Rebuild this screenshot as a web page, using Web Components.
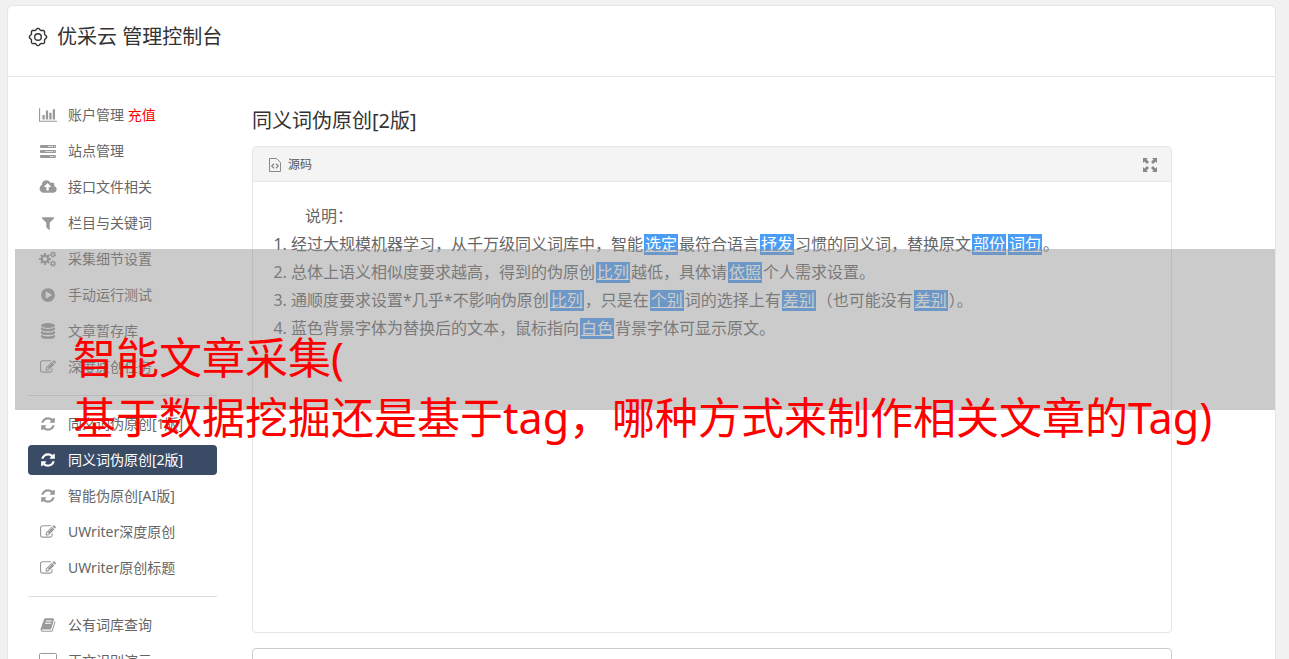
<!DOCTYPE html>
<html lang="zh-CN">
<head>
<meta charset="utf-8">
<meta name="viewport" content="width=device-width, initial-scale=1">
<title>优采云 管理控制台</title>
<style>
  body { margin: 0; background: #f1f1f1; color: #666; font: 14px/20px "Noto Sans", "Noto Sans CJK SC", sans-serif; }
</style>
</head>
<body>
<console-page></console-page>
<script>
// Outline of a gear: flat teeth around a circle, with a round hole.
function gear(cx, cy, outer, inner, hole, teeth, turn = 0) {
  const pts = [];
  const step = Math.PI * 2 / teeth;
  for (let i = 0; i < teeth; i++) {
    const a = i * step + turn;
    for (const [k, r] of [[-0.32, inner], [-0.2, outer], [0.2, outer], [0.32, inner]]) {
      pts.push((cx + Math.cos(a + k * step) * r).toFixed(2) + ' ' + (cy + Math.sin(a + k * step) * r).toFixed(2));
    }
  }
  return `M${pts.join('L')}ZM${cx - hole} ${cy}a${hole} ${hole} 0 1 0 ${hole * 2} 0a${hole} ${hole} 0 1 0 ${-hole * 2} 0z`;
}

const ICONS = {
  chart: [2048, 1792, '<path d="M640 896v512h-256v-512h256zm384-512v1024h-256v-1024h256zm1024 1152v128h-2048v-1536h128v1408h1920zm-640-896v768h-256v-768h256zm384-384v1152h-256v-1152h256z"/>'],
  server: [16, 16, '<g fill="none" stroke="currentColor"><path fill="currentColor" fill-opacity=".35" d="M.5 2.5h15v2H.5zM.5 7.5h15v2H.5zM.5 12.5h15v2H.5z"/></g><path d="M1 3h7v1H1zM1 8h4v1H1zM1 13h9v1H1zM13 3h1v1h-1zM13 8h1v1h-1zM13 13h1v1h-1z"/>'],
  upload: [2048, 1792, '<path d="M1344 864q0-14-9-23l-352-352q-9-9-23-9t-23 9l-351 351q-10 12-10 24 0 14 9 23t23 9h224v352q0 13 9.500 22.500t22.500 9.500h192q13 0 22.500-9.500t9.500-22.500v-352h224q13 0 22.500-9.500t9.500-22.500zm640 288q0 159-112.500 271.500t-271.500 112.500h-1088q-185 0-316.500-131.500t-131.500-316.500q0-130 70-240t188-165q-2-30-2-43 0-212 150-362t362-150q156 0 285.500 87t188.500 231q71-62 166-62 106 0 181 75t75 181q0 76-41 138 130 31 213.500 135.500t83.500 238.500z"/>'],
  filter: [1792, 1792, '<path d="M1595 295q17 41-14 70l-493 493v742q0 42-39 59-13 5-25 5-27 0-45-19l-256-256q-19-19-19-45v-486l-493-493q-31-29-14-70 17-39 59-39h1280q42 0 59 39z"/>'],
  cogs: [18, 16, `<path fill-rule="evenodd" d="${gear(6, 8, 6, 4.4, 2.1, 8)}${gear(14, 3.6, 3.2, 2.3, 1.1, 7, .3)}${gear(14, 12.6, 3.2, 2.3, 1.1, 7, .1)}"/>`],
  play: [1792, 1792, '<path d="M896 128q209 0 385.500 103t279.500 279.500 103 385.500-103 385.500-279.500 279.500-385.500 103-385.500-103-279.500-279.500-103-385.500 103-385.500 279.500-279.500 385.500-103zm384 823q32-18 32-55t-32-55l-544-320q-31-19-64-1-32 19-32 56v640q0 37 32 56 16 8 32 8 17 0 32-9z"/>'],
  database: [16, 16, '<ellipse cx="8" cy="2.500" rx="7" ry="2.500"/><path d="M1 4.300q2.500 1.700 7 1.700t7-1.700v1.700q0 2.300-7 2.300t-7-2.300zM1 8q2.500 1.700 7 1.700t7-1.700v1.700q0 2.300-7 2.300t-7-2.300zM1 11.700q2.500 1.700 7 1.700t7-1.700v1.700q0 2.500-7 2.500t-7-2.500z"/>'],
  edit: [1792, 1792, '<path d="M888 1184l116-116-152-152-116 116v56h96v96h56zm440-720q-16-16-33 1l-350 350q-17 17-1 33t33-1l350-350q17-17 1-33zm80 594v190q0 119-84.500 203.500t-203.500 84.500h-832q-119 0-203.500-84.500t-84.500-203.500v-832q0-119 84.500-203.500t203.500-84.500h832q63 0 117 25 15 7 18 23 3 17-9 29l-49 49q-14 14-32 8-23-6-45-6h-832q-66 0-113 47t-47 113v832q0 66 47 113t113 47h832q66 0 113-47t47-113v-126q0-13 9-22l64-64q15-15 35-7t20 29zm-96-738l288 288-672 672h-288v-288zm444 132l-92 92-288-288 92-92q28-28 68-28t68 28l152 152q28 28 28 68t-28 68z"/>'],
  refresh: [1792, 1792, '<path d="M1639 1056q0 5-1 7-64 268-268 434.500t-478 166.500q-146 0-282.500-55t-243.500-157l-129 129q-19 19-45 19t-45-19-19-45v-448q0-26 19-45t45-19h448q26 0 45 19t19 45-19 45l-137 137q71 66 161 102t187 36q134 0 250-65t186-179q11-17 53-117 8-23 30-23h192q13 0 22.500 9.500t9.500 22.500zm25-800v448q0 26-19 45t-45 19h-448q-26 0-45-19t-19-45 19-45l138-138q-148-137-349-137-134 0-250 65t-186 179q-11 17-53 117-8 23-30 23h-199q-13 0-22.500-9.500t-9.500-22.500v-7q65-268 270-434.500t480-166.500q146 0 284 55.500t245 156.500l130-129q19-19 45-19t45 19 19 45z"/>'],
  book: [1792, 1792, '<path d="M1703 478q40 57 18 129l-275 906q-19 64-76.500 107.500t-122.500 43.500h-923q-77 0-148.500-53.500t-99.500-131.500q-24-67-2-127 0-4 3-27t4-37q1-8-3-21.500t-3-19.500q2-11 8-21t16.500-23.500 16.500-23.500q23-38 45-91.500t30-91.500q3-10 .5-30t-.5-28q3-11 17-28t17-23q21-36 42-92t25-90q1-9-2.500-32t.5-28q4-13 22-30.500t22-22.500q19-26 42.500-84.500t27.500-96.500q1-8-3-25.500t-2-26.500q2-8 9-18t18-23 17-21q8-12 16.500-30.500t15-35 16-36 19.500-32 26.500-23.500 36-11.500 47.500 5.500l-1 3q38-9 51-9h761q74 0 114 56t18 130l-274 906q-36 119-71.500 153.500t-128.500 34.500h-869q-27 0-38 15-11 16-1 43 24 70 144 70h923q29 0 56-15.500t35-41.500l300-987q7-22 5-57 38 15 59 43zm-1064 2q-4 13 2 22.500t20 9.500h608q13 0 25.500-9.500t16.500-22.500l21-64q4-13-2-22.500t-20-9.500h-608q-13 0-25.500 9.500t-16.500 22.500zm-83 256q-4 13 2 22.500t20 9.500h608q13 0 25.500-9.500t16.500-22.500l21-64q4-13-2-22.500t-20-9.500h-608q-13 0-25.500 9.500t-16.500 22.500z"/>'],
  desktop: [18, 16, '<path fill="none" stroke="currentColor" d="M1.500.5h15q1 0 1 1v9q0 1-1 1h-15q-1 0-1-1v-9q0-1 1-1z"/><path d="M6 14h6v1H6z"/>'],
  gear: [20, 20, (() => {
    let d = '';
    for (let i = 0; i <= 144; i++) {
      const a = i / 144 * Math.PI * 2;
      const r = 7.9 + 0.75 * Math.cos(a * 8);
      d += (i ? 'L' : 'M') + (10 + r * Math.sin(a)).toFixed(2) + ' ' + (10 - r * Math.cos(a)).toFixed(2);
    }
    return `<g fill="none" stroke="currentColor" stroke-width="1.4"><path d="${d}Z"/><circle cx="10" cy="10" r="3.300"/></g>`;
  })()],
  source: [16, 16, '<path fill="none" stroke="currentColor" d="M2.500 1.500h7l4 4v9h-11z"/><path fill="none" stroke="currentColor" stroke-width="1.300" d="M7 6.800L4.800 9 7 11.200M9 6.800L11.200 9 9 11.200"/>'],
  expand: [16, 16, '<path d="M1 1h5L4.500 2.500 7 5 5 7 2.500 4.500 1 6zM15 1v5l-1.500-1.500L11 7 9 5l2.500-2.500L10 1zM1 15v-5l1.500 1.500L5 9l2 2-2.500 2.500L6 15zM15 15h-5l1.500-1.500L9 11l2-2 2.500 2.500L15 10z"/>'],
};

function define(name, html, setup) {
  const tpl = document.createElement('template');
  tpl.innerHTML = html;
  customElements.define(name, class extends HTMLElement {
    static observedAttributes = ['name'];
    constructor() {
      super();
      this.attachShadow({ mode: 'open' }).append(tpl.content.cloneNode(true));
    }
    connectedCallback() { if (setup) setup(this, this.shadowRoot); }
    attributeChangedCallback() { if (setup) setup(this, this.shadowRoot); }
  });
}

define('ui-icon', `
  <style>
    :host { display: inline-flex; justify-content: center; align-items: center; height: 16px; }
    :host([large]) { height: 20px; }
    svg { flex: none; height: 16px; fill: currentColor; display: block; }
    :host([large]) svg { height: 20px; }
  </style>
  <svg aria-hidden="true"></svg>`, (el, root) => {
  const icon = ICONS[el.getAttribute('name')];
  if (!icon) return;
  const [w, h, body] = icon;
  const svg = root.querySelector('svg');
  svg.setAttribute('viewBox', `0 0 ${w} ${h}`);
  svg.style.aspectRatio = `${w} / ${h}`;
  svg.innerHTML = body;
});

define('page-header', `
  <style>
    :host { display: block; padding: 20px 20px 29px; border-bottom: 1px solid #e5e5e5; color: #333; }
    h1 { display: flex; align-items: center; gap: 9px; margin: 0; font-size: 20px; line-height: 21px; font-weight: 400; }
  </style>
  <h1><ui-icon name="gear" large></ui-icon><slot></slot></h1>`);

define('nav-item', `
  <style>
    :host { display: block; }
    a { display: flex; align-items: center; gap: 10px; height: 30px; padding: 0 10px; border-radius: 4px; color: #666; text-decoration: none; white-space: nowrap; }
    ui-icon { flex: 0 0 20px; color: #999; }
    :host([active]) a { background: #3a4b66; color: #fff; }
    :host([active]) ui-icon { color: #fff; }
    ::slotted(em) { font-style: normal; color: #f00; }
  </style>
  <a href="#"><ui-icon></ui-icon><span><slot></slot></span></a>`, (el, root) => {
  root.querySelector('ui-icon').setAttribute('name', el.getAttribute('icon'));
  if (el.hasAttribute('active')) root.querySelector('a').setAttribute('aria-current', 'page');
});

define('side-nav', `
  <style>
    :host { display: block; flex: 0 0 189px; }
    nav { display: flex; flex-direction: column; gap: 6px; }
    ::slotted(hr) { width: 100%; margin: 7px 0; border: 0; border-top: 1px solid #ddd; }
  </style>
  <nav aria-label="功能菜单"><slot></slot></nav>`);

define('swap-word', `
  <style>
    :host { display: inline-block; margin: 0 1px; padding: 0 1px; line-height: 21px; background: #4a9df5; color: #fff; text-decoration: underline; }
  </style>
  <slot></slot>`);

define('source-panel', `
  <style>
    :host { display: flex; flex-direction: column; box-sizing: border-box; min-height: 487px; border: 1px solid #e5e5e5; border-radius: 4px; background: #fff; }
    header { display: flex; justify-content: space-between; align-items: center; height: 32px; padding: 2px 13px 0 14px; border-bottom: 1px solid #e5e5e5; border-radius: 4px 4px 0 0; background: #f4f4f4; }
    button { display: flex; align-items: center; gap: 5px; padding: 0; border: 0; background: none; color: #555; font: inherit; font-size: 12px; }
    ui-icon { color: #888; }
    .body { padding: 20px; font-size: 16px; line-height: 28px; }
  </style>
  <header>
    <button type="button"><ui-icon name="source"></ui-icon>源码</button>
    <button type="button" aria-label="全屏"><ui-icon name="expand"></ui-icon></button>
  </header>
  <div class="body"><slot></slot></div>`);

define('rewrite-notes', `
  <style>
    :host { display: block; }
    p { margin: 0; text-indent: 2em; }
    ol { margin: 0; padding-left: 18px; }
  </style>
  <p>说明：</p>
  <ol>
    <li>经过大规模机器学习，从千万级同义词库中，智能<swap-word>选定</swap-word>最符合语言<swap-word>抒发</swap-word>习惯的同义词，替换原文<swap-word>部份</swap-word><swap-word>词句</swap-word>。</li>
    <li>总体上语义相似度要求越高，得到的伪原创<swap-word>比列</swap-word>越低，具体请<swap-word>依照</swap-word>个人需求设置。</li>
    <li>通顺度要求设置*几乎*不影响伪原创<swap-word>比列</swap-word>，只是在<swap-word>个别</swap-word>词的选择上有<swap-word>差别</swap-word>（也可能没有<swap-word>差别</swap-word>）。</li>
    <li>蓝色背景字体为替换后的文本，鼠标指向<swap-word>白色</swap-word>背景字体可显示原文。</li>
  </ol>`);

define('result-box', `
  <style>
    :host { display: block; }
    textarea { display: block; box-sizing: border-box; width: 100%; height: 200px; border: 1px solid #ccc; border-radius: 4px; background: #fff; resize: none; font: inherit; }
  </style>
  <textarea aria-label="伪原创结果"></textarea>`);

// Translucent caption band laid over the console.
define('title-band', `
  <style>
    :host { position: absolute; top: 249px; left: 15px; right: 14px; box-sizing: border-box; height: 161px; padding: 79px 0 0 58px; background: rgba(146, 146, 146, .475); pointer-events: none; }
    h2 { margin: 0; color: #f00; font-size: 43px; line-height: 60px; font-weight: 400; white-space: nowrap; }
  </style>
  <h2><slot></slot></h2>`);

define('console-page', `
  <style>
    :host { display: block; position: relative; box-sizing: border-box; height: 100vh; overflow: hidden; padding: 6px 13px 0 7px; }
    .card { border: 1px solid #e5e5e5; border-top: 0; border-radius: 5px 5px 0 0; box-shadow: 0 -1px 0 #e5e5e5; background: #fff; }
    .columns { display: flex; align-items: flex-start; gap: 35px; padding: 23px 103px 20px 20px; }
    main { flex: 1; min-width: 0; }
    h2 { margin: 8px 0 12px; color: #333; font-size: 20px; line-height: 26px; font-weight: 400; }
    result-box { margin-top: 15px; }
  </style>
  <div class="card">
    <page-header>优采云 管理控制台</page-header>
    <div class="columns">
      <side-nav>
        <nav-item icon="chart">账户管理 <em>充值</em></nav-item>
        <nav-item icon="server">站点管理</nav-item>
        <nav-item icon="upload">接口文件相关</nav-item>
        <nav-item icon="filter">栏目与关键词</nav-item>
        <nav-item icon="cogs">采集细节设置</nav-item>
        <nav-item icon="play">手动运行测试</nav-item>
        <nav-item icon="database">文章暂存库</nav-item>
        <nav-item icon="edit">深度原创任务</nav-item>
        <hr>
        <nav-item icon="refresh">同义词伪原创[1版]</nav-item>
        <nav-item icon="refresh" active>同义词伪原创[2版]</nav-item>
        <nav-item icon="refresh">智能伪原创[AI版]</nav-item>
        <nav-item icon="edit">UWriter深度原创</nav-item>
        <nav-item icon="edit">UWriter原创标题</nav-item>
        <hr>
        <nav-item icon="book">公有词库查询</nav-item>
        <nav-item icon="desktop">正文识别演示</nav-item>
      </side-nav>
      <main>
        <h2>同义词伪原创[2版]</h2>
        <source-panel><rewrite-notes></rewrite-notes></source-panel>
        <result-box></result-box>
      </main>
    </div>
  </div>
  <title-band>智能文章采集(<br>基于数据挖掘还是基于tag，哪种方式来制作相关文章的Tag)</title-band>`);
</script>
</body>
</html>
